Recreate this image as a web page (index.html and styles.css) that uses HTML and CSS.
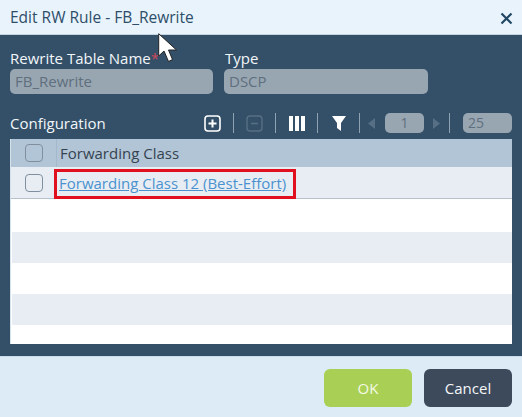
FILE: index.html
```html
<!DOCTYPE html>
<html>

<head>
    <link rel="stylesheet" href="styles.css">
</head>

<body>
    <div class="dialog">
        <div class="title-bar">
            <span class="title">Edit RW Rule - FB_Rewrite</span>
            <svg class="close" width="13" height="13" viewBox="0 0 13 13">
                <path d="M1.5 1.5L11.5 11.5M11.5 1.5L1.5 11.5" stroke="#1f4763" stroke-width="2.2" fill="none" />
            </svg>
        </div>

        <div class="content">
            <div class="fields">
                <div class="field">
                    <label class="field-label">Rewrite Table Name<span class="required">*</span></label>
                    <div class="input name-input">FB_Rewrite</div>
                </div>
                <div class="field">
                    <label class="field-label type-label">Type</label>
                    <div class="input type-input">DSCP</div>
                </div>
            </div>

            <div class="toolbar">
                <span class="config-label">Configuration</span>
                <div class="tools">
                    <div class="tool-slot">
                        <svg width="17" height="17" viewBox="0 0 17 17">
                            <rect x="1" y="1" width="15" height="15" rx="3" fill="none" stroke="#fff" stroke-width="1.6" />
                            <path d="M8.5 4.5V12.5M4.5 8.5H12.5" stroke="#fff" stroke-width="2" />
                        </svg>
                    </div>
                    <span class="sep"></span>
                    <div class="tool-slot">
                        <svg width="17" height="17" viewBox="0 0 17 17">
                            <rect x="1" y="1" width="15" height="15" rx="3" fill="none" stroke="#566f84" stroke-width="1.4" />
                            <path d="M5 8.5H12" stroke="#566f84" stroke-width="1.6" />
                        </svg>
                    </div>
                    <span class="sep"></span>
                    <div class="tool-slot">
                        <svg width="16" height="15" viewBox="0 0 16 15">
                            <path d="M0 0H4V15H0ZM6 0H10V15H6ZM12 0H16V15H12Z" fill="#fff" />
                        </svg>
                    </div>
                    <span class="sep"></span>
                    <div class="tool-slot">
                        <svg width="14" height="15" viewBox="0 0 14 15">
                            <path d="M0 0H14L9 7V15L5 12V7Z" fill="#fff" />
                        </svg>
                    </div>
                    <span class="sep"></span>
                    <svg class="arrow arrow-prev" width="7" height="11" viewBox="0 0 7 11">
                        <path d="M7 0V11L0 5.5Z" fill="#566f84" />
                    </svg>
                    <div class="pager-box page-num">1</div>
                    <svg class="arrow arrow-next" width="7" height="11" viewBox="0 0 7 11">
                        <path d="M0 0V11L7 5.5Z" fill="#566f84" />
                    </svg>
                    <span class="sep"></span>
                    <div class="pager-box page-size">25</div>
                </div>
            </div>

            <div class="grid">
                <div class="grid-row grid-head">
                    <div class="check-cell"><span class="check"></span></div>
                    <div class="cell">Forwarding Class</div>
                </div>
                <div class="grid-row grid-first">
                    <div class="check-cell"><span class="check"></span></div>
                    <div class="cell">
                        <span class="highlight"><a class="link" href="#">Forwarding Class 12 (Best-Effort)</a></span>
                    </div>
                </div>
                <div class="blank"></div>
                <div class="blank stripe"></div>
                <div class="blank"></div>
                <div class="blank stripe"></div>
                <div class="blank"></div>
            </div>
        </div>

        <div class="footer">
            <button class="btn btn-ok" type="button">OK</button>
            <button class="btn btn-cancel" type="button">Cancel</button>
        </div>
    </div>

    <svg class="cursor" width="20" height="30" viewBox="0 0 20 30">
        <path d="M0.7 0.7V23L6 18L10.5 28.5L14.5 26.5L10.5 17H18.5Z" fill="#fff" stroke="#222" stroke-width="1" />
    </svg>
</body>

</html>
```

FILE: styles.css
```css
* {
    box-sizing: border-box;
}

body {
    margin: 0;
    width: 522px;
    height: 417px;
    overflow: hidden;
    font-family: 'Open Sans', 'Noto Sans', sans-serif;
}

.dialog {
    display: flex;
    flex-direction: column;
    height: 417px;
}

.title-bar {
    display: flex;
    align-items: center;
    justify-content: space-between;
    height: 35px;
    padding: 0 9px 0 10px;
    background-color: #e9f3fc;
    border-bottom: 1px solid #c3d4e0;
}

.title {
    font-size: 15.5px;
    color: #2d4e68;
}

.close {
    margin-top: 3px;
}

.content {
    height: 321px;
    padding: 14px 10px 12px;
    background-color: #345068;
}

.fields {
    display: flex;
    gap: 11px;
}

.field-label {
    display: block;
    height: 20px;
    font-size: 15px;
    line-height: 18px;
    color: #f2f6f9;
}

.type-label {
    padding-left: 1px;
}

.required {
    color: #c9485b;
}

.input {
    height: 25px;
    padding-left: 5px;
    border-radius: 5px;
    background-color: #98a6b2;
    font-size: 15px;
    line-height: 24px;
    color: #5f6f7d;
}

.name-input {
    width: 203px;
}

.type-input {
    width: 204px;
}

.toolbar {
    display: flex;
    align-items: center;
    justify-content: space-between;
    height: 24px;
    margin-top: 17px;
    margin-bottom: 4px;
}

.config-label {
    font-size: 15px;
    color: #f2f6f9;
}

.tools {
    display: flex;
    align-items: center;
}

.tool-slot {
    display: flex;
    align-items: center;
    justify-content: center;
    width: 41px;
}

.sep {
    width: 1px;
    height: 20px;
    background-color: #8fa2b2;
}

.arrow-prev {
    margin: 0 10px 0 8px;
}

.arrow-next {
    margin: 0 9px;
}

.pager-box {
    height: 20px;
    border-radius: 5px;
    background-color: #98a6b2;
    font-size: 14px;
    line-height: 20px;
    color: #5f6f7d;
}

.page-num {
    width: 39px;
    text-align: center;
}

.page-size {
    width: 49px;
    margin-left: 13px;
    padding-left: 5px;
}

.grid {
    height: 205px;
    background-color: #fff;
    border-left: 1px solid #d6e2ea;
}

.grid-row {
    display: flex;
    align-items: center;
}

.grid-head {
    height: 28px;
    background-color: #b1c5d7;
}

.grid-first {
    height: 32px;
    background-color: #e8edf3;
    border-bottom: 1px solid #b5c2cc;
}

.check-cell {
    display: flex;
    align-items: center;
    justify-content: center;
    width: 46px;
    height: 100%;
}

.grid-head .check-cell {
    border-right: 1px solid #a3b8ca;
}

.check {
    width: 18px;
    height: 18px;
    border: 1.5px solid #7f8f9d;
    border-radius: 4px;
}

.cell {
    flex: 1;
    padding-left: 3px;
    font-size: 15px;
    color: #36434f;
}

.grid-first .cell {
    padding-left: 0;
    margin-left: -3px;
}

.highlight {
    display: inline-block;
    height: 30px;
    margin-top: 2px;
    padding: 0 7px 0 2px;
    border: 3px solid #e0101f;
    line-height: 22px;
}

.link {
    color: #4a92cf;
}

.blank {
    height: 31px;
}

.blank:nth-child(3) {
    height: 33px;
}

.blank.stripe {
    background-color: #e8edf3;
    margin-left: 1px;
}

.blank:last-child {
    height: 19px;
}

.footer {
    display: flex;
    flex: 1;
    justify-content: flex-end;
    align-items: flex-start;
    gap: 12px;
    padding: 12px 10px 0;
    background-color: #dcebf6;
    border-top: 1px solid #c8dbe8;
}

.btn {
    width: 88px;
    height: 38px;
    border: none;
    border-radius: 6px;
    font-family: inherit;
    font-size: 15px;
}

.btn-ok {
    background-color: #a9d055;
    color: #f4f9e4;
}

.btn-cancel {
    background-color: #3d4a5c;
    color: #f4f6f8;
}

.cursor {
    position: absolute;
    left: 158px;
    top: 33px;
}
```
